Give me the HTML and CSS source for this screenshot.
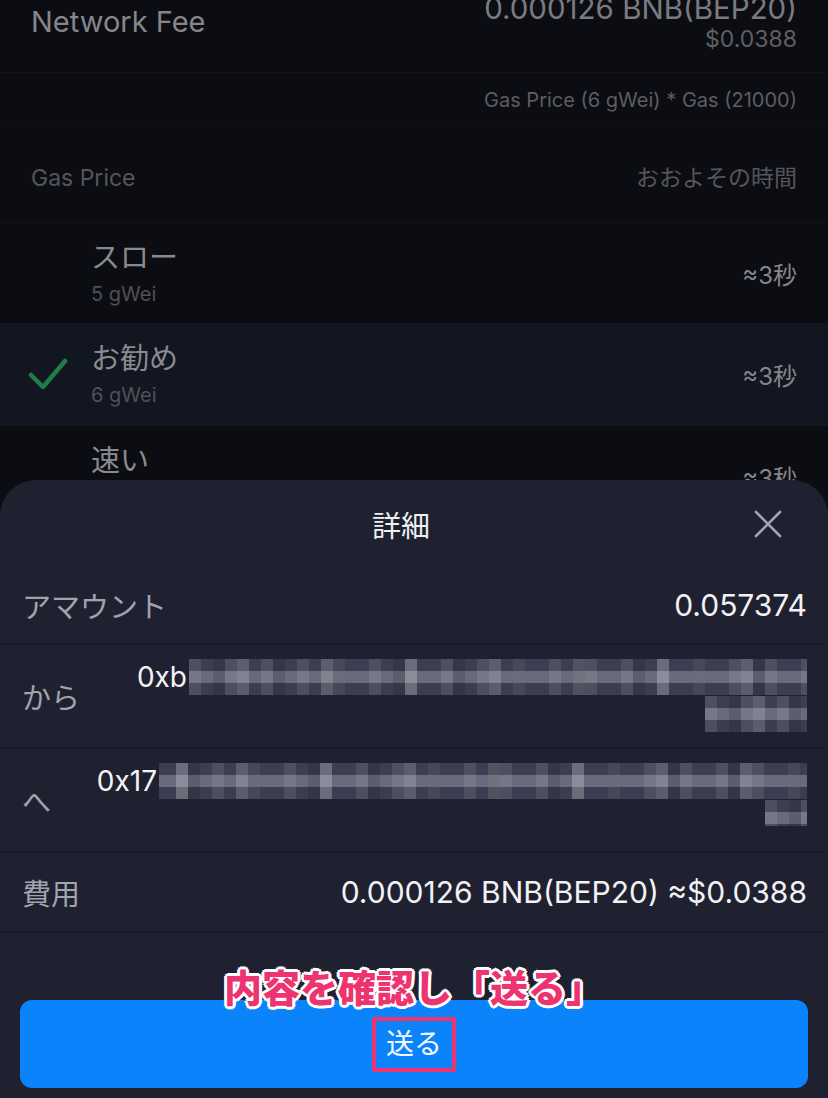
FILE: index.html
```html
<!DOCTYPE html>
<html lang="ja">
<head>
    <meta charset="UTF-8">
    <meta name="viewport" content="width=device-width, initial-scale=1.0">
    <title>詳細</title>
    <link rel="stylesheet" href="styles.css">
</head>
<body>
    <div class="screen">
        <div class="fee-row">
            <div class="fee-label">Network Fee</div>
            <div class="fee-value">
                <div class="fee-main">0.000126 BNB(BEP20)</div>
                <div class="fee-usd">$0.0388</div>
            </div>
        </div>
        <div class="formula">Gas Price (6 gWei) * Gas (21000)</div>
        <div class="gas-head">
            <span>Gas Price</span>
            <span>おおよその時間</span>
        </div>

        <div class="speed">
            <div class="speed-check"></div>
            <div class="speed-name">
                <div class="speed-title">スロー</div>
                <div class="speed-sub">5 gWei</div>
            </div>
            <div class="speed-time">≈3秒</div>
        </div>
        <div class="speed selected">
            <div class="speed-check">
                <svg width="40" height="34" viewBox="0 0 40 34"><path d="M3 17 L15 29 L37 3" fill="none" stroke="#1f7d47" stroke-width="4.5" stroke-linecap="round" stroke-linejoin="round"/></svg>
            </div>
            <div class="speed-name">
                <div class="speed-title">お勧め</div>
                <div class="speed-sub">6 gWei</div>
            </div>
            <div class="speed-time">≈3秒</div>
        </div>
        <div class="speed">
            <div class="speed-check"></div>
            <div class="speed-name">
                <div class="speed-title">速い</div>
                <div class="speed-sub">7 gWei</div>
            </div>
            <div class="speed-time">≈3秒</div>
        </div>

        <div class="sheet">
            <div class="sheet-head">
                <div class="sheet-title">詳細</div>
                <svg class="close" width="30" height="30" viewBox="0 0 30 30"><path d="M3 3 L27 27 M27 3 L3 27" stroke="#a3a5b1" stroke-width="2.6" stroke-linecap="round"/></svg>
            </div>

            <div class="row amount">
                <div class="row-label">アマウント</div>
                <div class="row-value">0.057374</div>
            </div>

            <div class="row addr-row">
                <div class="row-label">から</div>
                <div class="addr">
                    <div class="addr-line">
                        <span class="addr-text">0xb</span>
                        <span class="mosaic"></span>
                    </div>
                    <span class="mosaic tail from-tail"></span>
                </div>
            </div>

            <div class="row addr-row">
                <div class="row-label">へ</div>
                <div class="addr">
                    <div class="addr-line">
                        <span class="addr-text">0x17</span>
                        <span class="mosaic alt"></span>
                    </div>
                    <span class="mosaic tail to-tail"></span>
                </div>
            </div>

            <div class="row cost">
                <div class="row-label">費用</div>
                <div class="row-value">0.000126 BNB(BEP20) ≈$0.0388</div>
            </div>

            <div class="send-area">
                <div class="note">内容を確認し「送る」</div>
                <button class="send"><span class="send-mark">送る</span></button>
            </div>
        </div>
    </div>
</body>
</html>
```

FILE: styles.css
```css
body {
    margin: 0;
    background: #0c0d12;
    font-family: Inter, "Noto Sans CJK JP", sans-serif;
    overflow: hidden;
}
.screen {
    position: relative;
    width: 828px;
    height: 1098px;
    overflow: hidden;
}
.fee-row {
    display: flex;
    justify-content: space-between;
    margin-top: -8px;
    padding: 0 31px 20px;
    border-bottom: 1px solid #131419;
}
.fee-label {
    margin-top: 14px;
    font-size: 29px;
    line-height: 32px;
    color: #85868c;
}
.fee-value {
    text-align: right;
}
.fee-main {
    font-size: 29.5px;
    line-height: 32px;
    color: #7a7b81;
}
.fee-usd {
    margin-top: 2px;
    font-size: 23px;
    line-height: 26px;
    color: #5f6066;
}
.formula {
    padding: 16px 31px 11px;
    text-align: right;
    font-size: 20px;
    line-height: 22px;
    color: #5c5d63;
    border-bottom: 1px solid #111217;
}
.gas-head {
    display: flex;
    justify-content: space-between;
    padding: 42px 31px 31px;
    font-size: 23px;
    line-height: 26px;
    color: #55565c;
    border-bottom: 1px solid #121318;
}
.speed {
    display: flex;
    align-items: center;
    height: 100px;
    padding: 0 31px 0 28px;
}
.speed.selected {
    height: 103px;
    background: #121620;
}
.speed-check {
    width: 63px;
    display: flex;
    align-items: center;
}
.speed-name {
    flex: 1;
}
.speed-title {
    font-size: 29px;
    line-height: 36px;
    color: #898a90;
}
.speed-sub {
    margin-top: 5px;
    font-size: 20px;
    line-height: 26px;
    color: #505158;
}
.speed-time {
    font-size: 24px;
    color: #85868c;
}
.sheet {
    position: absolute;
    left: 0;
    right: 0;
    bottom: 0;
    height: 618px;
    background: #1f2130;
    border-radius: 36px 36px 0 0;
}
.sheet-head {
    position: relative;
    height: 87px;
    display: flex;
    align-items: center;
    justify-content: center;
}
.sheet-title {
    margin-right: 26px;
    font-size: 29px;
    color: #f0f0f3;
}
.close {
    position: absolute;
    right: 45px;
    top: 29px;
}
.row {
    display: flex;
    align-items: center;
    justify-content: space-between;
    padding: 0 21px 0 22px;
    border-bottom: 2px solid #1a1c29;
}
.amount {
    height: 76px;
}
.addr-row {
    height: 102px;
}
.cost {
    height: 78px;
}
.row-label {
    font-size: 29px;
    color: #a1a3ae;
}
.row-value {
    font-size: 30px;
    color: #f2f2f5;
}
.addr {
    flex: 1;
    display: flex;
    flex-direction: column;
    align-items: flex-end;
    align-self: flex-start;
    margin-top: 14px;
}
.addr-line {
    display: flex;
    align-items: center;
    justify-content: flex-end;
    width: 100%;
}
.addr-text {
    font-size: 28px;
    color: #f4f4f7;
    margin-right: 2px;
}
.mosaic {
    display: block;
    height: 36px;
    width: 618px;
    background:
        repeating-linear-gradient(90deg, rgba(255,255,255,.09) 0 12px, transparent 12px 36px),
        repeating-linear-gradient(90deg, transparent 0 24px, rgba(0,0,0,.12) 24px 36px, transparent 36px 60px),
        repeating-linear-gradient(90deg, transparent 0 48px, rgba(255,255,255,.16) 48px 60px, transparent 60px 84px),
        linear-gradient(#3c3f52 0 12px, #686b7b 12px 24px, #3b3e50 24px 36px);
}
.mosaic.alt {
    width: 648px;
    background-position: 17px 0, 5px 0, 29px 0, 0 0;
}
.tail {
    height: 36px;
    margin-top: 1px;
}
.from-tail {
    width: 102px;
}
.to-tail {
    width: 42px;
    height: 26px;
}
.send-area {
    position: relative;
    padding: 67px 20px 0;
}
.note {
    position: absolute;
    left: 0;
    right: 0;
    top: 35px;
    z-index: 1;
    text-align: center;
    font-size: 38px;
    font-weight: 900;
    line-height: 40px;
    color: #ee3470;
    text-shadow:
        3px 0 0 #fff, -3px 0 0 #fff, 0 3px 0 #fff, 0 -3px 0 #fff,
        2px 2px 0 #fff, -2px 2px 0 #fff, 2px -2px 0 #fff, -2px -2px 0 #fff;
}
.send {
    display: flex;
    align-items: center;
    justify-content: center;
    width: 100%;
    height: 88px;
    border: none;
    border-radius: 12px;
    background: #0b84fb;
    font-family: Inter, "Noto Sans CJK JP", sans-serif;
}
.send-mark {
    padding: 4px 10px;
    border: 4px solid #ee3470;
    border-radius: 2px;
    font-size: 28px;
    line-height: 39px;
    color: #f4f8ff;
}
```
